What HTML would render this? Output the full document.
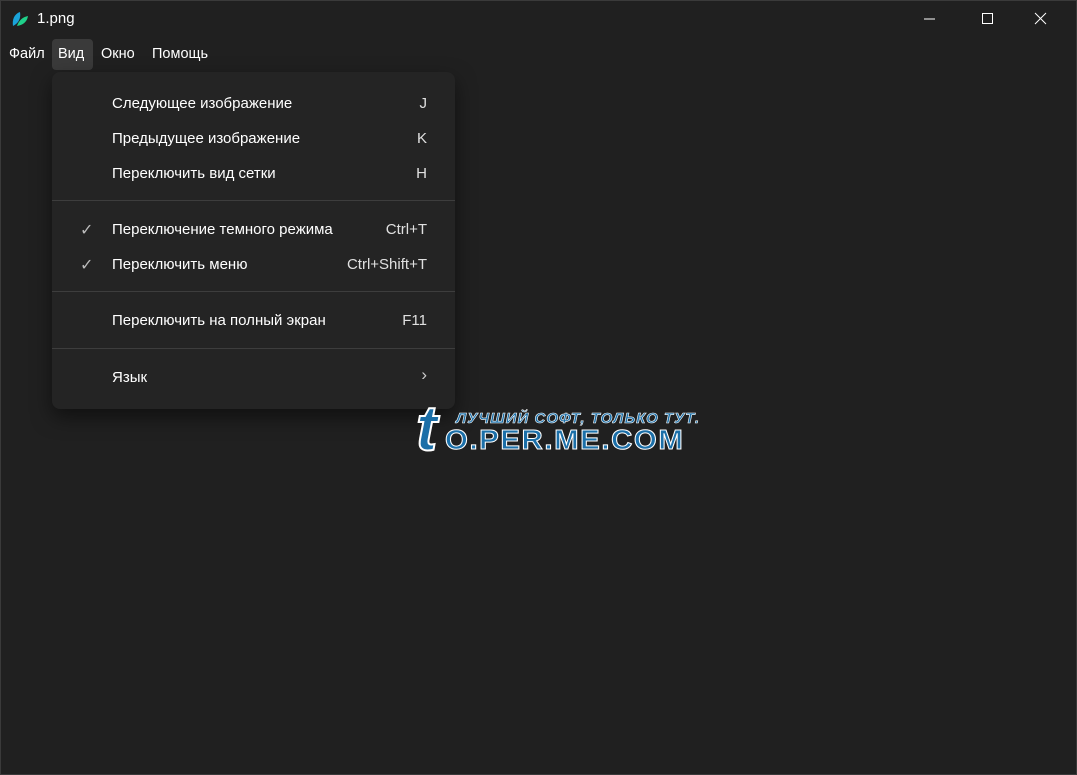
<!DOCTYPE html>
<html><head><meta charset="utf-8"><style>
html,body{margin:0;padding:0}
body{width:1077px;height:775px;background:#202020;font-family:"Segoe UI","Liberation Sans",sans-serif;color:#fff;position:relative;overflow:hidden;font-size:14px}
.win{position:absolute;inset:0;border:1px solid #3a3a3a;box-sizing:border-box}
.t{position:absolute;white-space:nowrap}
.mb{position:absolute;top:39px;height:31px;line-height:30px;font-size:14.5px;padding:0 6px}
.menu{position:absolute;left:52px;top:72px;width:403px;height:337px;background:#242424;border-radius:8px;box-shadow:0 8px 20px rgba(0,0,0,.5)}
.it{position:absolute;left:60px;font-size:15px;color:#fff}
.k{position:absolute;right:28px;font-size:15px;color:#e0e0e0}
.sep{position:absolute;left:0;right:0;height:1px;background:#3d3d3d}
.ck{position:absolute;left:28px;color:#bbb;font-size:16px}
</style></head><body>
<div class="win"></div>
<svg style="position:absolute;left:11px;top:10px" width="18" height="18" viewBox="0 0 18 18"><path d="M2 16C1 10 3 4 9 2C10 8 8 13 2 16Z" fill="#1aa3d9"/><path d="M6 16C8 10 12 7 17 6C16 12 12 15 6 16Z" fill="#1fd08a"/></svg>
<div class="t" style="left:37px;top:10px;font-size:15px">1.png</div>
<svg style="position:absolute;left:920px;top:10px" width="140" height="18"><line x1="4" y1="9" x2="15" y2="9" stroke="#fff"/><rect x="62.5" y="3.5" width="10" height="10" fill="none" stroke="#fff"/><path d="M115 3L126 14M126 3L115 14" stroke="#fff"/></svg>
<div class="mb" style="left:3px">Файл</div>
<div class="mb" style="left:52px;width:29px;background:#3a3a3a;border-radius:4px">Вид</div>
<div class="mb" style="left:95px">Окно</div>
<div class="mb" style="left:146px">Помощь</div>
<div class="menu">
<div class="it" style="top:23px">Следующее изображение</div><div class="k" style="top:23px">J</div>
<div class="it" style="top:58px">Предыдущее изображение</div><div class="k" style="top:58px">K</div>
<div class="it" style="top:93px">Переключить вид сетки</div><div class="k" style="top:93px">H</div>
<div class="sep" style="top:128px"></div>
<div class="ck" style="top:148px">✓</div><div class="it" style="top:149px">Переключение темного режима</div><div class="k" style="top:149px">Ctrl+T</div>
<div class="ck" style="top:183px">✓</div><div class="it" style="top:184px">Переключить меню</div><div class="k" style="top:184px">Ctrl+Shift+T</div>
<div class="sep" style="top:219px"></div>
<div class="it" style="top:240px">Переключить на полный экран</div><div class="k" style="top:240px">F11</div>
<div class="sep" style="top:276px"></div>
<div class="it" style="top:297px">Язык</div><div class="k" style="top:293px;color:#ccc;font-size:17px">›</div>
</div>
<div class="t" style="left:416px;top:398px;font-size:64px;font-weight:bold;font-style:italic;color:#1b6fa8;line-height:60px;-webkit-text-stroke:2px #fff">t</div>
<div class="t" style="left:456px;top:410px;font-size:15px;font-weight:bold;font-style:italic;color:#1b6fa8;-webkit-text-stroke:0.6px #fff;letter-spacing:1px">ЛУЧШИЙ СОФТ, ТОЛЬКО ТУТ.</div>
<div class="t" style="left:445px;top:424px;font-size:28px;font-weight:bold;color:#1b6fa8;-webkit-text-stroke:1px #fff;letter-spacing:1.5px;transform:scaleX(1.05);transform-origin:left">O.PER.ME.COM</div>
</body></html>
